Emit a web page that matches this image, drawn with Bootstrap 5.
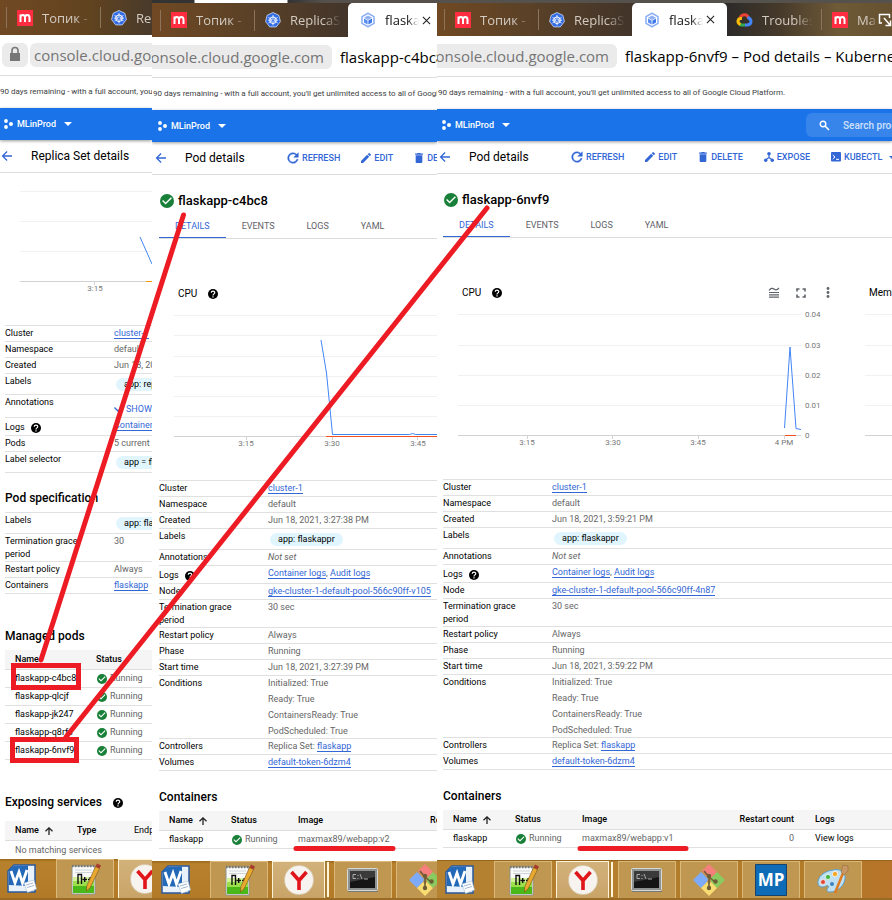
<!DOCTYPE html>
<html lang="en">
<head>
<meta charset="utf-8">
<meta name="viewport" content="width=device-width, initial-scale=1">
<title>Replica set and its pods</title>
<link href="https://cdn.jsdelivr.net/npm/bootstrap@5.3.0/dist/css/bootstrap.min.css" rel="stylesheet">
<script src="https://cdn.jsdelivr.net/npm/bootstrap@5.3.0/dist/js/bootstrap.bundle.min.js" defer></script>
<style>
  body { font: 9px/13px Roboto, "Noto Sans", sans-serif; color: #000; background: #fff; overflow-x: hidden; }
  svg { flex: none; }
  button, input { font: inherit; color: inherit; background: none; border: 0; padding: 0; text-align: left; }
  .board { display: grid; grid-template-columns: 152fr 285fr 455fr; min-height: 100vh; }
  .pane { --shift: 0px; min-width: 0; overflow: hidden; white-space: nowrap; background: #fff; }
  .pane-b { --shift: 2px; }
  .pane-c { --shift: 1px; }
  .inset { padding-left: calc(5px + var(--shift)); }

  /* browser frame */
  .strip { height: calc(35px + var(--shift)); padding-left: calc(6px + var(--shift)); font: 13px/20px "Open Sans", "Noto Sans", sans-serif; color: #d3cbc2; }
  .pane-a .strip { background: linear-gradient(90deg, #704923, #60431f 60%, #493a2b); }
  .pane-b .strip { padding-top: 3px; background: linear-gradient(90deg, #333 42px, #fff 43px, #fff 135px, #333 136px, #55504b 60%) 0 0 / 100% 3px no-repeat, linear-gradient(90deg, #704923, #5a4127 35%, #43352a 68%); }
  .pane-c .strip { padding-top: 3px; background: linear-gradient(#55514d, #55514d) 0 0 / 100% 3px no-repeat, linear-gradient(90deg, #704923, #5a4127 20%, #43352a 42%, #2c2b29 64%, #45392a 75%, #6f5a38 88%, #65502f); }
  .win-tab { flex: 0 0 94px; padding-left: 10px; border-left: 1px solid #8b745b; gap: 9px; height: 21px; margin: auto 0; overflow: hidden; }
  .win-tab span { flex: 0 0 51px; overflow: hidden; -webkit-mask-image: linear-gradient(90deg, #000 65%, transparent); mask-image: linear-gradient(90deg, #000 65%, transparent); }
  .win-tab.open { flex-basis: 95px; height: 100%; border: 0; padding-left: 12px; background: #fff; color: #111; border-radius: 5px 5px 0 0; }
  .win-tab.open span { flex-basis: 34px; }
  .win-tab.open svg:last-child { margin-left: -6px; }
  .win-tab.plain { border: 0; padding-left: 9px; }
  .win-tab.cut span { flex-basis: 20px; }
  .win-tab.cut svg:last-child { margin-left: -8px; }
  .address { height: 41px; border-bottom: 1px solid #ddd; font: 15px/24px "Open Sans", "Noto Sans", sans-serif; }
  .pane-a .address { padding-left: 2px; gap: 2px; }
  .pill { height: 24px; background: #ebebeb; border-radius: 6px; color: #757575; }
  .host { flex: none; padding: 0 4px; overflow: hidden; }
  .pane-b .host, .pane-c .host { width: 180px; border-radius: 0 6px 6px 0; direction: rtl; padding: 0 8px 0 0; }
  .doc-title { min-width: 0; flex: 1; padding-left: 8px; }
  .promo { height: 32px; font-size: 8px; line-height: 32px; color: #3c4043; }
  .pane-b .promo, .pane-c .promo { padding-left: 1px; }

  /* console header */
  .topbar { height: 32px; padding-left: calc(4px + var(--shift)); background: #1a73e8; color: #fff; font-weight: 500; box-shadow: 0 1px 3px #0006; position: relative; }
  .finder { width: 86px; height: 24px; margin-left: auto; border-radius: 6px 0 0 6px; padding-left: 13px; gap: 13px; background: #3785eb; }
  .finder input { width: 61px; font-size: 10px; font-weight: 500; }
  .finder input::placeholder { color: #cfe0fb; opacity: 1; }
  .pagebar { height: 33px; border-bottom: 1px solid #ddd; padding-left: calc(1px + var(--shift)); color: #3367d6; }
  .pagebar h1 { font: 12px/16px Roboto, sans-serif; color: #000; margin: 0 0 0 18px; flex: none; }
  .pane-b h1, .pane-c h1 { width: 102px; }
  .act { flex: none; gap: 3px; font-weight: 500; margin-right: 21px; line-height: 16px; }

  .name { font: 500 13px/16px Roboto, sans-serif; padding-top: 18px; gap: 3px; margin: 0; }
  .tabs { height: 30px; border-bottom: 1px solid #ddd; margin-left: calc(5px + var(--shift)); }
  .tabs a { height: 29px; padding: 11px 16px 0; color: #5f6368; text-decoration: none; }
  .tabs a.active { color: #3367d6; border-bottom: 1px solid #3367d6; }
  .plot-head { padding: 47px 20px 0 calc(24px + var(--shift)); height: 62px; gap: 11px; font-size: 10px; line-height: 15px; }
  .plot-head .tool { width: 27px; height: 15px; color: #5f6368; }
  .plot-main { flex: 0 0 424px; }
  .plot text { font: 8px Roboto, sans-serif; fill: #777; }
  .plot .g { stroke: #f1f1f1; }
  .plot .ax { stroke: #d2d2d2; }

  .sheet { width: 100%; border-collapse: separate; border-spacing: 0; border-top: 1px solid #e0e0e0; table-layout: fixed; }
  .sheet th { width: 109px; font-weight: 400; white-space: normal; }
  .sheet th, .sheet td { height: 16px; padding: 1px 0 0; vertical-align: top; border-bottom: 1px solid #e0e0e0; }
  .sheet td { color: #666; }
  .sheet .tall th, .sheet .tall td { height: 21px; }
  .sheet .tall td { padding-top: 4px; }
  .sheet .logs th, .sheet .logs td { height: 18px; }
  .sheet .logs th { padding-top: 3px; }
  .sheet .note th, .sheet .note td { height: 23px; }
  .sheet .note td { padding-top: 8px; }
  .sheet .note button { color: #3367d6; }
  .sheet .term th, .sheet .term td { height: 28px; }
  .sheet .term th { padding-right: 30px; }
  .stack { display: grid; gap: 3px; }
  .chip { display: inline-block; height: 13px; margin-left: 2px; padding: 0 8px; border-radius: 7px; background: #e1f5fe; color: #000; vertical-align: top; }
  a.lnk { color: #3367d6; text-decoration: none; border-bottom: 1px solid #3367d6; }
  .sec { font: 500 12px/16px Roboto, sans-serif; margin: 0; padding: 18px 0 6px; }
  .pane-a .sec { padding-top: 17px; }
  .pane-a .sec.far { padding-top: 34px; }
  .pane-a .sec.last { padding-bottom: 11px; }
  .list { width: 100%; table-layout: fixed; border-collapse: separate; border-spacing: 0; }
  .list th, .list td { padding: 0; }
  .list th { height: 20px; background: #f5f5f5; font-weight: 500; border-bottom: 1px solid #ddd; }
  .list td { height: 18px; border-bottom: 1px solid #e0e0e0; color: #666; }
  .list th:first-child, .list td:first-child { padding-left: 10px; color: #000; }
  .list td.mute:first-child { color: #666; border: 0; }
  .list .w-pod { width: 91px; }
  .list .w-name { width: 72px; }
  .list .w-kind { width: 57px; }
  .list .w-state { width: 67px; }
  .list .w-image { width: 132px; }
  .list .w-count { width: 80px; }
  .list .gap-l { padding-left: 21px; }
  .ok { gap: 3px; display: flex; align-items: center; padding-left: 1px; }

  /* desktop taskbar */
  .taskbar { height: calc(41px - var(--shift)); padding-left: var(--shift); background: linear-gradient(#9a6a1c, #b8812d 3px, #b27a27); border-bottom: 2px solid #9a6b24; gap: 4px; }
  .pane-c .taskbar { background: linear-gradient(90deg, #b58232, #b17b28 80%, #b7742a); border-top: 1px solid #93651d; }
  .task { flex: 0 0 58px; height: 100%; border: 1px solid #dbb877; border-bottom: 0; background: #c09750; }
  .task.bare { flex-basis: 52px; background: none; border: 0; padding-right: 8px; }
  .task.now { background: linear-gradient(#d2b27b, #c9a468); border: 1px solid #fff3d8; border-bottom: 0; flex-basis: 53px; box-shadow: 3px 0 0 -1px #a97e38, 5px 0 0 -1px #fff3d8; margin-right: 5px; }
  .marks { position: absolute; left: 0; top: 0; width: 892px; height: 900px; pointer-events: none; }
</style>
</head>
<body>
<svg width="0" height="0" class="position-absolute" aria-hidden="true">
  <symbol id="i-m" viewBox="0 0 16 16"><path fill="#ff2d3f" d="M0 0h16v16H0z"/><path fill="none" stroke="#fff" stroke-width="2" d="M3.500 12V4.500M3.500 7.500Q3.600 5 5.800 5T8 7.500V12M8 7.500Q8.200 5 10.300 5T12.500 7.500V12"/></symbol>
  <symbol id="i-helm" viewBox="0 0 16 16"><path fill="#326ce5" stroke="#e8eefb" stroke-width=".7" d="M8 .5l5.900 2.800 1.500 6.300-4.100 5.300H4.700L.6 9.600l1.500-6.300z"/><circle cx="8" cy="8.200" r="3.300" fill="none" stroke="#fff"/><path stroke="#fff" stroke-width=".8" d="M8 3v10.400M3.500 5.500l9 5.400M12.500 5.500l-9 5.400M3 8.200h10"/><circle cx="8" cy="8.200" r="1" fill="#326ce5"/></symbol>
  <symbol id="i-pod" viewBox="0 0 16 16"><path fill="none" stroke="#8fb1f3" stroke-width="1.600" d="M8 1.200l6 3.400v6.800l-6 3.400-6-3.400V4.600z"/><path fill="#8fb1f3" d="M8 3.500L12 5.700 8 8 4 5.700z"/><path fill="#5b8def" d="M4 6.500l3.600 2v4L4 10.500z"/><path fill="#3f78ea" d="M12 6.500l-3.600 2v4l3.600-2z"/></symbol>
  <symbol id="i-gcp" viewBox="0 0 16 14"><g fill="none" stroke-width="3"><path stroke="#ea4335" d="M3.500 4.700Q5 1.700 8 1.700T12 5"/><path stroke="#4285f4" d="M11 4.500q3.500 1 3.500 4t-3.500 3.500H8.500"/><path stroke="#34a853" d="M8.500 12H4.500L3 11"/><path stroke="#fbbc05" d="M4 11.500Q1 10 1.600 7.500T5.500 5.500"/></g></symbol>
  <symbol id="i-x" viewBox="0 0 10 10"><path stroke="#222" stroke-width="1.200" d="M1 1l8 8M9 1L1 9"/></symbol>
  <symbol id="i-dots" viewBox="0 0 9 10"><g fill="#fff"><circle cx="2" cy="2" r="1.900"/><circle cx="2" cy="8" r="1.900"/><circle cx="7" cy="5" r="2"/></g></symbol>
  <symbol id="i-caret" viewBox="0 0 8 4"><path fill="currentColor" d="M0 0h8L4 4z"/></symbol>
  <symbol id="i-back" viewBox="0 0 24 24"><path fill="currentColor" d="M22 10.700H6.500l6.600-6.600L11.300 2 1.300 12l10 10 1.800-1.900-6.600-6.700H22z"/></symbol>
  <symbol id="i-refresh" viewBox="3 3 18 18"><path fill="currentColor" stroke="currentColor" stroke-width=".6" d="M17.650 6.350A7.960 7.960 0 0 0 12 4a8 8 0 1 0 7.730 10h-2.080A6 6 0 1 1 12 6c1.660 0 3.140.69 4.220 1.780L13 11h7V4z"/></symbol>
  <symbol id="i-edit" viewBox="3 3 18 18"><path fill="currentColor" d="M3 17.250V21h3.750L17.810 9.940l-3.750-3.750zM20.710 7.040a1 1 0 0 0 0-1.410l-2.340-2.340a1 1 0 0 0-1.410 0l-1.830 1.830 3.750 3.750z"/></symbol>
  <symbol id="i-bin" viewBox="4 3 16 18"><path fill="currentColor" d="M6 19c0 1.100.9 2 2 2h8a2 2 0 0 0 2-2V7H6zM19 4h-3.500l-1-1h-5l-1 1H5v2h14z"/></symbol>
  <symbol id="i-expose" viewBox="0 0 10 10"><g fill="currentColor"><circle cx="5" cy="1.800" r="1.800"/><circle cx="1.700" cy="8.200" r="1.700"/><circle cx="8.300" cy="8.200" r="1.700"/></g><path fill="none" stroke="currentColor" stroke-width="1.200" d="M5 2v3.500L1.700 8M5 5.500L8.300 8"/></symbol>
  <symbol id="i-shell" viewBox="0 0 10 10"><rect width="10" height="9.500" rx="1" fill="currentColor"/><path fill="none" stroke="#fff" d="M1.800 3l2.200 2-2.200 2M5 7.300h3"/></symbol>
  <symbol id="i-check" viewBox="2 2 20 20"><circle cx="12" cy="12" r="10" fill="#188038"/><path fill="#fff" d="M10 17l-5-5 1.410-1.410L10 14.170l7.590-7.590L19 8z"/></symbol>
  <symbol id="i-help" viewBox="2 2 20 20"><circle cx="12" cy="12" r="10" fill="#000"/><path fill="none" stroke="#fff" stroke-width="2.400" d="M8.500 9.500C8.500 5 15.500 5 15.500 9.300 15.500 11.700 12 12 12 15"/><path stroke="#fff" stroke-width="2.400" d="M12 16.500v2.300"/></symbol>
  <symbol id="i-up" viewBox="0 0 8 8"><path fill="none" stroke="#222" stroke-width="1.300" d="M4 8V1M.5 4.300L4 .9l3.500 3.400"/></symbol>
  <symbol id="i-word" viewBox="0 0 30 30"><path fill="#e9f1fb" stroke="#285a9f" stroke-width="1.500" d="M7 1h21v27H1V7z"/><path fill="#2468b8" d="M2 6l5-4 14-.5V22L2 21z"/><path fill="none" stroke="#fff" stroke-width="2.800" d="M4 7l4 12 4-11 3.500 11L20 6"/><path fill="#fff" stroke="#a9bdd6" stroke-width=".6" d="M17 19l10-3 2.500 9-9 3.500z"/><path stroke="#7d9ac0" stroke-width=".7" d="M19 21l7-2M20 23.500l7-2"/></symbol>
  <symbol id="i-npp" viewBox="0 0 32 32"><path fill="#fafafa" stroke="#8b938b" d="M3 3h23v28H3z"/><path fill="#d3f39a" d="M4 14h21v5H4z"/><path fill="#9be04a" d="M4 18h21v5H4z"/><path fill="#49b818" d="M4 23h21v7H4z"/><path stroke="#777" stroke-dasharray="1.500 1.500" stroke-width="2.500" d="M3 3h23"/><path stroke="#bbc5c9" stroke-width=".7" d="M6 7h17M6 9.500h17"/><path fill="none" stroke="#111" stroke-width="1.400" d="M9 21v-9.500h3.500V21M13.500 16.500h4.500M15.700 14v5M19 16.500h4.500M21.200 14v5"/><path fill="#e9a92e" stroke="#76531c" stroke-width=".6" d="M26.500 3.500l4 2L21 25l-3.500 3 .2-5z"/><path fill="#a83a2c" d="M28 .6l4 2-1.500 3-4-2z"/></symbol>
  <symbol id="i-ya" viewBox="0 0 30 30"><circle cx="15" cy="15" r="14.700" fill="#f7f4ef" stroke="#c9b48e" stroke-width=".6"/><path fill="none" stroke="#e0161b" stroke-width="3.600" d="M7.500 7l7.500 8.500L22.500 7M15 14.500V25"/></symbol>
  <symbol id="i-cmd" viewBox="0 0 32 24"><rect x=".5" y=".5" width="30" height="22" rx="1" fill="#8e9290" stroke="#d7dad6"/><path fill="#151515" d="M3 3h25v17H3z"/><path fill="#3a3a3a" d="M3 3h25v6L3 14z"/><path fill="none" stroke="#aaa" d="M9 6.500H6v4h3M11 7v1M11 10v1M13 6l2 5M17 11h4"/><path fill="#777" d="M1 23h30v1H1z"/></symbol>
  <symbol id="i-git" viewBox="0 0 32 32"><path fill="#f57f7c" d="M16 0l8 8-6 6-3-1-6-6z"/><path fill="#7dabf9" d="M8 8l7 7-1 3-6 6-8-8z"/><path fill="#8acb5f" d="M24 8l8 8-8 8-6-6 0-4z"/><path fill="#f9dd72" d="M14 18l2 2 2-2 6 6-8 8-8-8z"/><path fill="none" stroke="#6d5d35" stroke-width="1.600" d="M11 7l5 6v12M16 13l6 5"/><g fill="#6d5d35"><circle cx="16" cy="12" r="2.200"/><circle cx="16" cy="24" r="2.200"/><circle cx="22.500" cy="17.500" r="2.200"/></g></symbol>
  <symbol id="i-paint" viewBox="0 0 32 32"><path fill="#bfe0f3" stroke="#5c9fca" d="M16 6c8-2 13 3 12 9-1 7-8 13-15 13-3 0-4-2-2-4 1-2 0-3-2-2-4 2-7 1-8-2C0 13 7 7 16 6z"/><g stroke="#fff" stroke-width=".7"><circle cx="6" cy="18" r="2.500" fill="#e04835"/><circle cx="11" cy="13" r="2.600" fill="#45b54a"/><circle cx="18" cy="10" r="2.600" fill="#f6a723"/></g><circle cx="15" cy="20" r="2" fill="#3f84bd"/><path stroke="#e07b1f" stroke-width="2.500" d="M26 9l-8 20"/><path fill="#c79864" stroke="#85603a" stroke-width=".5" d="M24 8l2-7 5 1 0 5-4 4z"/></symbol>
</svg>

<main class="board position-relative">

  <!-- replica set -->
  <section class="pane pane-a d-flex flex-column">
    <nav class="strip d-flex">
      <button class="win-tab d-flex align-items-center"><svg width="16" height="16"><use href="#i-m"/></svg><span>Топик -</span></button>
      <button class="win-tab d-flex align-items-center"><svg width="16" height="16"><use href="#i-helm"/></svg><span>ReplicaSet</span></button>
    </nav>
    <div class="address d-flex align-items-center">
      <button class="pill px-2 d-flex align-items-center flex-shrink-0" aria-label="Site security"><svg width="10" height="24" viewBox="0 0 10 24"><path fill="#777" d="M0 10h10v8H0z"/><path fill="none" stroke="#777" stroke-width="1.600" d="M2 10V7.500a3 3 0 0 1 6 0V10"/></svg></button>
      <button class="pill host">console.cloud.google.com</button>
    </div>
    <div class="promo">90 days remaining - with a full account, you'll get unlimited access to all of Google Cloud Platform.</div>
    <header class="topbar d-flex align-items-center"><button class="d-flex align-items-center"><svg width="9" height="10" class="me-1"><use href="#i-dots"/></svg>MLinProd<svg width="8" height="4" class="ms-2"><use href="#i-caret"/></svg></button></header>
    <div class="pagebar d-flex align-items-center"><button aria-label="Back" class="d-flex"><svg width="12" height="12"><use href="#i-back"/></svg></button><h1>Replica Set details</h1></div>
    <svg class="plot" width="100%" height="152">
      <path class="g" d="M20 18.500H900M20 48.500H900M20 78.500H900"/><path class="ax" d="M20 108.500H900M94.500 109v3"/>
      <path stroke="#f29900" d="M146 108.500h300"/><path fill="none" stroke="#4285f4" d="M140 64l12 27"/>
      <text x="95" y="118" text-anchor="middle">3:15</text>
    </svg>
    <div class="inset">
      <table class="sheet">
        <tr><th>Cluster</th><td><a class="lnk" href="#">cluster-1</a></td></tr>
        <tr><th>Namespace</th><td>default</td></tr>
        <tr><th>Created</th><td>Jun 18, 2021</td></tr>
        <tr class="tall"><th>Labels</th><td><span class="chip">app: replica</span></td></tr>
        <tr class="note"><th>Annotations</th><td><button class="d-flex align-items-center"><svg width="8" height="5" viewBox="0 0 8 5" class="me-1"><path fill="none" stroke="#3367d6" stroke-width="1.300" d="M.5.5L4 4 7.500.5"/></svg>SHOW</button></td></tr>
        <tr class="logs"><th>Logs <svg width="10" height="10" class="ms-1"><use href="#i-help"/></svg></th><td><a class="lnk" href="#">Container logs</a></td></tr>
        <tr><th>Pods</th><td>5 current / 5</td></tr>
        <tr class="tall"><th>Label selector</th><td><span class="chip">app = flaskappr</span></td></tr>
      </table>
      <h2 class="sec">Pod specification</h2>
      <table class="sheet">
        <tr class="tall"><th>Labels</th><td><span class="chip">app: flaskappr</span></td></tr>
        <tr class="term"><th>Termination grace period</th><td>30</td></tr>
        <tr><th>Restart policy</th><td>Always</td></tr>
        <tr><th>Containers</th><td><a class="lnk" href="#">flaskapp</a></td></tr>
      </table>
      <h2 class="sec far">Managed pods</h2>
      <table class="list">
        <tr><th class="w-pod">Name</th><th>Status</th></tr>
        <tr><td>flaskapp-c4bc8</td><td><span class="ok"><svg width="10" height="10"><use href="#i-check"/></svg>Running</span></td></tr>
        <tr><td>flaskapp-qlcjf</td><td><span class="ok"><svg width="10" height="10"><use href="#i-check"/></svg>Running</span></td></tr>
        <tr><td>flaskapp-jk247</td><td><span class="ok"><svg width="10" height="10"><use href="#i-check"/></svg>Running</span></td></tr>
        <tr><td>flaskapp-q8rfs</td><td><span class="ok"><svg width="10" height="10"><use href="#i-check"/></svg>Running</span></td></tr>
        <tr><td>flaskapp-6nvf9</td><td><span class="ok"><svg width="10" height="10"><use href="#i-check"/></svg>Running</span></td></tr>
      </table>
      <h2 class="sec far last">Exposing services <svg width="10" height="10" class="ms-2"><use href="#i-help"/></svg></h2>
      <table class="list">
        <tr><th class="w-name">Name <svg width="8" height="8" class="ms-1"><use href="#i-up"/></svg></th><th class="w-kind">Type</th><th class="fw-normal">Endpoints</th></tr>
        <tr><td colspan="3" class="mute">No matching services</td></tr>
      </table>
    </div>
    <footer class="taskbar d-flex mt-auto">
      <button class="task bare d-flex align-items-center justify-content-center" aria-label="Word"><svg width="30" height="30"><use href="#i-word"/></svg></button>
      <button class="task d-flex align-items-center justify-content-center" aria-label="Notepad++"><svg width="32" height="32"><use href="#i-npp"/></svg></button>
      <button class="task now d-flex align-items-center justify-content-center" aria-label="Browser"><svg width="30" height="30"><use href="#i-ya"/></svg></button>
    </footer>
  </section>

  <!-- first pod -->
  <section class="pane pane-b d-flex flex-column">
    <nav class="strip d-flex">
      <button class="win-tab d-flex align-items-center"><svg width="16" height="16"><use href="#i-m"/></svg><span>Топик -</span></button>
      <button class="win-tab d-flex align-items-center"><svg width="16" height="16"><use href="#i-helm"/></svg><span>ReplicaSet</span></button>
      <button class="win-tab open d-flex align-items-center"><svg width="16" height="16"><use href="#i-pod"/></svg><span>flaskapp</span><svg width="9" height="9"><use href="#i-x"/></svg></button>
    </nav>
    <div class="address d-flex align-items-center">
      <button class="pill host">console.cloud.google.com</button>
      <input class="doc-title" aria-label="Page title" value="flaskapp-c4bc8 – Pod details – Kubernetes">
    </div>
    <div class="promo">90 days remaining - with a full account, you'll get unlimited access to all of Google Cloud Platform.</div>
    <header class="topbar d-flex align-items-center"><button class="d-flex align-items-center"><svg width="9" height="10" class="me-1"><use href="#i-dots"/></svg>MLinProd<svg width="8" height="4" class="ms-2"><use href="#i-caret"/></svg></button></header>
    <div class="pagebar d-flex align-items-center"><button aria-label="Back" class="d-flex"><svg width="12" height="12"><use href="#i-back"/></svg></button><h1>Pod details</h1>
      <button class="act d-flex align-items-center"><svg width="12" height="12"><use href="#i-refresh"/></svg>REFRESH</button>
      <button class="act d-flex align-items-center"><svg width="10" height="10"><use href="#i-edit"/></svg>EDIT</button>
      <button class="act d-flex align-items-center"><svg width="10" height="10"><use href="#i-bin"/></svg>DELETE</button>
    </div>
    <h2 class="name inset d-flex align-items-center"><svg width="16" height="14"><use href="#i-check"/></svg>flaskapp-c4bc8</h2>
    <nav class="tabs d-flex"><a href="#" class="active">DETAILS</a><a href="#">EVENTS</a><a href="#">LOGS</a><a href="#">YAML</a></nav>
    <div class="plot-head d-flex align-items-center">CPU<svg width="10" height="10"><use href="#i-help"/></svg></div>
    <svg class="plot" width="100%" height="179">
      <path class="g" d="M22 14.500H900M22 34.500H900M22 55.500H900M22 75.500H900M22 95.500H900M22 115.500H900"/><path class="ax" d="M22 135.500H900M94.500 136v3M180.500 136v3M265.500 136v3"/>
      <path stroke="#f4511e" d="M174 135.500h500"/><path fill="none" stroke="#4285f4" d="M169 39l5.500 33 6 61.500h77l3-1 3 1h300"/>
      <text x="94" y="145" text-anchor="middle">3:15</text><text x="180" y="145" text-anchor="middle">3:30</text><text x="266" y="145" text-anchor="middle">3:45</text>
    </svg>
    <div class="inset">
      <table class="sheet">
        <tr><th>Cluster</th><td><a class="lnk" href="#">cluster-1</a></td></tr>
        <tr><th>Namespace</th><td>default</td></tr>
        <tr><th>Created</th><td>Jun 18, 2021, 3:27:38 PM</td></tr>
        <tr class="tall"><th>Labels</th><td><span class="chip">app: flaskappr</span></td></tr>
        <tr><th>Annotations</th><td><i>Not set</i></td></tr>
        <tr class="logs"><th>Logs <svg width="10" height="10" class="ms-1"><use href="#i-help"/></svg></th><td><a class="lnk" href="#">Container logs</a>, <a class="lnk" href="#">Audit logs</a></td></tr>
        <tr><th>Node</th><td><a class="lnk" href="#">gke-cluster-1-default-pool-566c90ff-v105</a></td></tr>
        <tr class="term"><th>Termination grace period</th><td>30 sec</td></tr>
        <tr><th>Restart policy</th><td>Always</td></tr>
        <tr><th>Phase</th><td>Running</td></tr>
        <tr><th>Start time</th><td>Jun 18, 2021, 3:27:39 PM</td></tr>
        <tr><th>Conditions</th><td><div class="stack"><span>Initialized: True</span><span>Ready: True</span><span>ContainersReady: True</span><span>PodScheduled: True</span></div></td></tr>
        <tr><th>Controllers</th><td>Replica Set: <a class="lnk" href="#">flaskapp</a></td></tr>
        <tr><th>Volumes</th><td><a class="lnk" href="#">default-token-6dzm4</a></td></tr>
      </table>
      <h2 class="sec">Containers</h2>
      <table class="list">
        <tr><th class="w-name">Name <svg width="8" height="8" class="ms-1"><use href="#i-up"/></svg></th><th class="w-state">Status</th><th class="w-image">Image</th><th>Restart count</th></tr>
        <tr><td>flaskapp</td><td><span class="ok"><svg width="10" height="10"><use href="#i-check"/></svg>Running</span></td><td>maxmax89/webapp:v2</td><td></td></tr>
      </table>
    </div>
    <footer class="taskbar d-flex mt-auto">
      <button class="task bare d-flex align-items-center justify-content-center" aria-label="Word"><svg width="30" height="30"><use href="#i-word"/></svg></button>
      <button class="task d-flex align-items-center justify-content-center" aria-label="Notepad++"><svg width="32" height="32"><use href="#i-npp"/></svg></button>
      <button class="task now d-flex align-items-center justify-content-center" aria-label="Browser"><svg width="30" height="30"><use href="#i-ya"/></svg></button>
      <button class="task d-flex align-items-center justify-content-center" aria-label="Command prompt"><svg width="32" height="24"><use href="#i-cmd"/></svg></button>
      <button class="task d-flex align-items-center justify-content-center" aria-label="Git"><svg width="32" height="32"><use href="#i-git"/></svg></button>
    </footer>
  </section>

  <!-- second pod -->
  <section class="pane pane-c d-flex flex-column">
    <nav class="strip d-flex">
      <button class="win-tab d-flex align-items-center"><svg width="16" height="16"><use href="#i-m"/></svg><span>Топик -</span></button>
      <button class="win-tab d-flex align-items-center"><svg width="16" height="16"><use href="#i-helm"/></svg><span>ReplicaSet</span></button>
      <button class="win-tab open d-flex align-items-center"><svg width="16" height="16"><use href="#i-pod"/></svg><span>flaskapp</span><svg width="9" height="9"><use href="#i-x"/></svg></button>
      <button class="win-tab plain d-flex align-items-center"><svg width="17" height="14"><use href="#i-gcp"/></svg><span>Troubleshoot</span></button>
      <button class="win-tab cut d-flex align-items-center"><svg width="16" height="16"><use href="#i-m"/></svg><span>Master</span><svg width="14" height="14" viewBox="0 0 14 14"><path fill="none" stroke="#fff" stroke-width="1.500" d="M4 10H1.500V1.500h10V5M6 5l6 7M12.500 7.500V12.500H7.500"/></svg></button>
    </nav>
    <div class="address d-flex align-items-center">
      <button class="pill host">console.cloud.google.com</button>
      <input class="doc-title" aria-label="Page title" value="flaskapp-6nvf9 – Pod details – Kubernetes">
    </div>
    <div class="promo">90 days remaining - with a full account, you'll get unlimited access to all of Google Cloud Platform.</div>
    <header class="topbar d-flex align-items-center"><button class="d-flex align-items-center"><svg width="9" height="10" class="me-1"><use href="#i-dots"/></svg>MLinProd<svg width="8" height="4" class="ms-2"><use href="#i-caret"/></svg></button>
      <label class="finder d-flex align-items-center"><svg width="11" height="11" viewBox="0 0 11 11"><circle cx="4" cy="4" r="2.800" fill="none" stroke="#fff" stroke-width="1.400"/><path stroke="#fff" stroke-width="1.600" d="M6 6l4 4"/></svg><input type="search" aria-label="Search" placeholder="Search products"></label>
    </header>
    <div class="pagebar d-flex align-items-center"><button aria-label="Back" class="d-flex"><svg width="12" height="12"><use href="#i-back"/></svg></button><h1>Pod details</h1>
      <button class="act d-flex align-items-center"><svg width="12" height="12"><use href="#i-refresh"/></svg>REFRESH</button>
      <button class="act d-flex align-items-center"><svg width="10" height="10"><use href="#i-edit"/></svg>EDIT</button>
      <button class="act d-flex align-items-center"><svg width="10" height="10"><use href="#i-bin"/></svg>DELETE</button>
      <button class="act d-flex align-items-center"><svg width="10" height="10"><use href="#i-expose"/></svg>EXPOSE</button>
      <button class="act d-flex align-items-center"><svg width="10" height="10"><use href="#i-shell"/></svg>KUBECTL<svg width="6" height="3" class="ms-1"><use href="#i-caret"/></svg></button>
    </div>
    <h2 class="name inset d-flex align-items-center"><svg width="16" height="14"><use href="#i-check"/></svg>flaskapp-6nvf9</h2>
    <nav class="tabs d-flex"><a href="#" class="active">DETAILS</a><a href="#">EVENTS</a><a href="#">LOGS</a><a href="#">YAML</a></nav>
    <div class="d-flex">
      <div class="plot-main">
        <div class="plot-head d-flex align-items-center">CPU<svg width="10" height="10"><use href="#i-help"/></svg>
          <div class="d-flex ms-auto">
            <button class="tool d-flex align-items-center justify-content-center" aria-label="Legend"><svg width="12" height="11" viewBox="0 0 12 11"><path fill="none" stroke="currentColor" stroke-width="1.200" d="M1 3.500Q3.500 0 6 2T11 1M1 5.500h10M1 7.800h10M1 10.100h10"/></svg></button>
            <button class="tool d-flex align-items-center justify-content-center" aria-label="Full screen"><svg width="10" height="10" viewBox="0 0 10 10"><path fill="none" stroke="currentColor" stroke-width="1.600" d="M1 3.500V1h2.500M6.500 1H9v2.500M9 6.500V9H6.500M3.500 9H1V6.500"/></svg></button>
            <button class="tool d-flex align-items-center justify-content-center" aria-label="More"><svg width="4" height="11" viewBox="0 0 4 11"><g fill="currentColor"><circle cx="2" cy="1.500" r="1.400"/><circle cx="2" cy="5.500" r="1.400"/><circle cx="2" cy="9.500" r="1.400"/></g></svg></button>
          </div>
        </div>
        <svg class="plot d-block" width="100%" height="179">
          <path class="g" d="M21 14.500H364M21 45.500H364M21 75.500H364M21 105.500H364"/><path class="ax" d="M21 135.500H364M90.500 136v3M175.500 136v3M261.500 136v3M347.500 136v3"/>
          <path stroke="#f4511e" d="M348 135.500h11"/><path fill="none" stroke="#4285f4" d="M347.500 128l5.500-81 6 81.500 5 1"/>
          <g text-anchor="middle"><text x="90" y="145">3:15</text><text x="176" y="145">3:30</text><text x="261" y="145">3:45</text><text x="347" y="145">4 PM</text></g>
          <text x="368" y="17">0.04</text><text x="368" y="48">0.03</text><text x="368" y="78">0.02</text><text x="368" y="108">0.01</text><text x="368" y="138">0</text>
        </svg>
      </div>
      <div class="flex-grow-1 overflow-hidden">
        <div class="plot-head d-flex align-items-center ps-2 pe-0">Memory</div>
        <svg class="plot d-block" width="100%" height="179"><path class="g" d="M4 14.500H900M4 45.500H900M4 75.500H900M4 105.500H900"/><path class="ax" d="M4 135.500H900"/></svg>
      </div>
    </div>
    <div class="inset">
      <table class="sheet">
        <tr><th>Cluster</th><td><a class="lnk" href="#">cluster-1</a></td></tr>
        <tr><th>Namespace</th><td>default</td></tr>
        <tr><th>Created</th><td>Jun 18, 2021, 3:59:21 PM</td></tr>
        <tr class="tall"><th>Labels</th><td><span class="chip">app: flaskappr</span></td></tr>
        <tr><th>Annotations</th><td><i>Not set</i></td></tr>
        <tr class="logs"><th>Logs <svg width="10" height="10" class="ms-1"><use href="#i-help"/></svg></th><td><a class="lnk" href="#">Container logs</a>, <a class="lnk" href="#">Audit logs</a></td></tr>
        <tr><th>Node</th><td><a class="lnk" href="#">gke-cluster-1-default-pool-566c90ff-4n87</a></td></tr>
        <tr class="term"><th>Termination grace period</th><td>30 sec</td></tr>
        <tr><th>Restart policy</th><td>Always</td></tr>
        <tr><th>Phase</th><td>Running</td></tr>
        <tr><th>Start time</th><td>Jun 18, 2021, 3:59:22 PM</td></tr>
        <tr><th>Conditions</th><td><div class="stack"><span>Initialized: True</span><span>Ready: True</span><span>ContainersReady: True</span><span>PodScheduled: True</span></div></td></tr>
        <tr><th>Controllers</th><td>Replica Set: <a class="lnk" href="#">flaskapp</a></td></tr>
        <tr><th>Volumes</th><td><a class="lnk" href="#">default-token-6dzm4</a></td></tr>
      </table>
      <h2 class="sec">Containers</h2>
      <table class="list">
        <tr><th class="w-name">Name <svg width="8" height="8" class="ms-1"><use href="#i-up"/></svg></th><th class="w-state">Status</th><th class="w-image">Image</th><th class="text-end w-count">Restart count</th><th class="gap-l">Logs</th></tr>
        <tr><td>flaskapp</td><td><span class="ok"><svg width="10" height="10"><use href="#i-check"/></svg>Running</span></td><td>maxmax89/webapp:v1</td><td class="text-end">0</td><td class="gap-l"><a href="#" class="text-black text-decoration-none">View logs</a></td></tr>
      </table>
    </div>
    <footer class="taskbar d-flex mt-auto">
      <button class="task bare d-flex align-items-center justify-content-center" aria-label="Word"><svg width="30" height="30"><use href="#i-word"/></svg></button>
      <button class="task d-flex align-items-center justify-content-center" aria-label="Notepad++"><svg width="32" height="32"><use href="#i-npp"/></svg></button>
      <button class="task now d-flex align-items-center justify-content-center" aria-label="Browser"><svg width="30" height="30"><use href="#i-ya"/></svg></button>
      <button class="task d-flex align-items-center justify-content-center" aria-label="Command prompt"><svg width="32" height="24"><use href="#i-cmd"/></svg></button>
      <button class="task d-flex align-items-center justify-content-center" aria-label="Git"><svg width="32" height="32"><use href="#i-git"/></svg></button>
      <button class="task d-flex align-items-center justify-content-center" aria-label="MP"><svg width="32" height="32" viewBox="0 0 32 32"><path fill="#0d6cb5" stroke="#16436b" d="M.5.500h31v31H.5z"/><text x="16" y="22" text-anchor="middle" font-family="Open Sans, sans-serif" font-size="17" font-weight="700" fill="#fff">MP</text></svg></button>
      <button class="task d-flex align-items-center justify-content-center" aria-label="Paint"><svg width="32" height="32"><use href="#i-paint"/></svg></button>
    </footer>
  </section>

  <!-- hand-drawn marks joining each pod name to its page -->
  <svg class="marks" viewBox="0 0 892 900" aria-hidden="true">
    <g fill="none" stroke="#ed1c24" stroke-width="5">
      <path stroke-linecap="round" d="M183.500 215L41 660M487 208L66 737M296 848.500h97M580 848.500h106"/>
      <path d="M13.500 665.500h65v22h-65zM12.500 739.500h64v21h-64z"/>
    </g>
  </svg>
</main>
</body>
</html>
